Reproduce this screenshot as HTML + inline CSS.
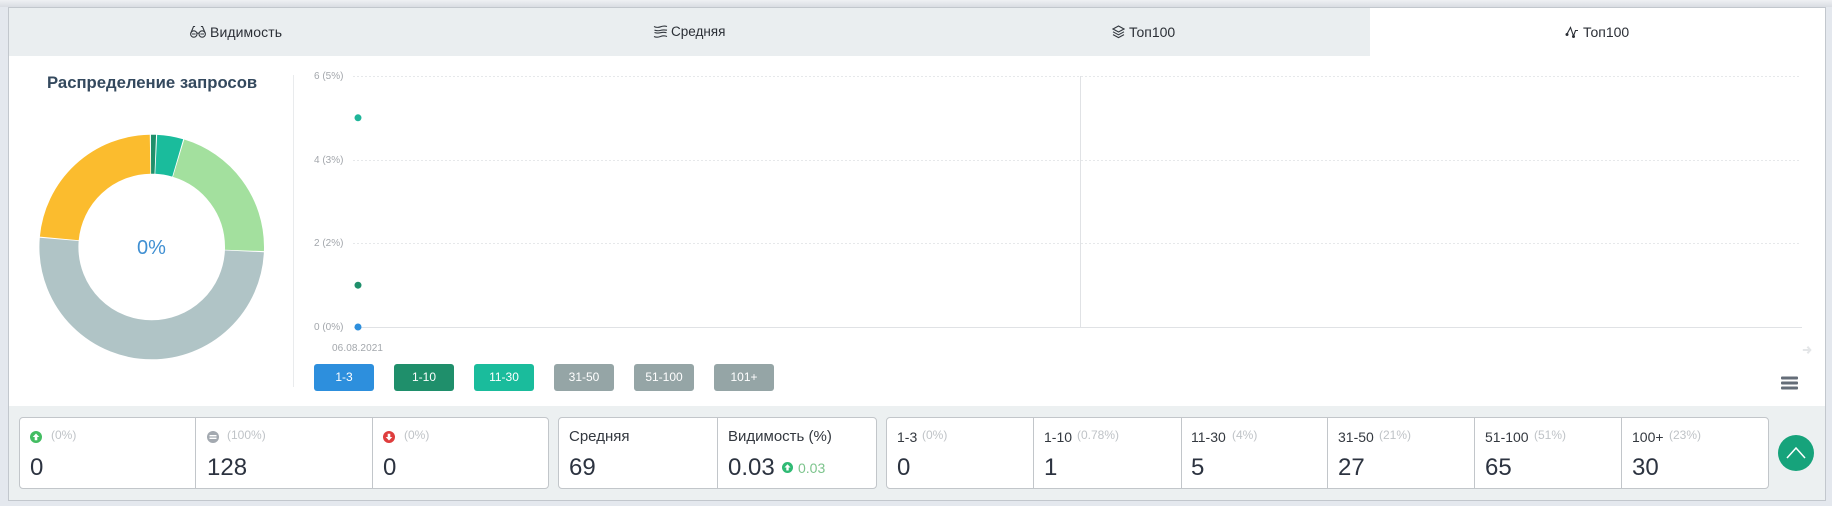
<!DOCTYPE html>
<html lang="ru">
<head>
<meta charset="utf-8">
<title>Распределение запросов</title>
<style>
html,body{margin:0;padding:0}
body{width:1832px;height:506px;overflow:hidden;position:relative;background:#e4e8ee;font-family:"Liberation Sans",sans-serif;color:#2c3340}
.abs,.t,.svg{position:absolute}
.t{white-space:nowrap;line-height:16px}
#top{left:0;top:0;width:1832px;height:7px;background:linear-gradient(#eef0f3,#d9dde3)}
#panel{left:8px;top:7px;width:1816px;height:492px;border:1px solid #c2c7cd;background:#fff;box-sizing:content-box}
#tabs{left:9px;top:8px;width:1361px;height:48px;background:#eaeef0}
#bottom{left:9px;top:406px;width:1816px;height:94px;background:#ecf0f1}
.tab{font-size:14px;color:#2b2f36;top:24px}
.card{top:417px;height:72px;background:#fff;border:1px solid #c2c6ca;border-radius:4px;box-sizing:border-box}
.div{top:417px;height:72px;width:1px;background:#c2c6ca}
.lab{font-size:14px;color:#33383f;top:429px}
.pct{font-size:12px;color:#bfc3c7;top:427px}
.num{font-size:24px;line-height:28px;color:#2c3340;top:454px}
.ax{font-size:10px;color:#a3a7ac;left:314px;line-height:12px}
.btn{top:364px;width:60px;height:27px;border-radius:3px;color:#fff;font-size:12px;line-height:27px;text-align:center}
</style>
</head>
<body>
<div class="abs" id="top"></div>
<div class="abs" id="panel"></div>
<div class="abs" id="tabs"></div>
<div class="abs" id="bottom"></div>

<svg class="svg" style="left:189px;top:24px" width="18" height="15" viewBox="0 0 17 15" fill="none" stroke="#33383f" stroke-width="1.1"><circle cx="4.3" cy="10" r="3.2"/><circle cx="12.7" cy="10" r="3.2"/><path d="M7.5 9.5q1-.8 2 0M1.2 9.5 4 2.5h1.6M15.8 9.5 13 2.5h-1.6M2.5 10h3.6M10.9 10h3.6"/></svg>
<div class="t tab" style="left:210px;letter-spacing:.1px">Видимость</div>

<svg class="svg" style="left:653px;top:24px" width="15" height="15" viewBox="0 0 15 15" fill="none" stroke="#33383f" stroke-width="1.1"><path d="M1 2.5q3 1.6 6.5.3T14 2.5M1.5 6.2q3.5 1 6 .2t6.5-.2M1.5 8.5q3 1 6 .2t6 0M1 12.5q3 1.4 6.5 0t6.5 0"/></svg>
<div class="t tab" style="left:671px;font-size:13.5px">Средняя</div>

<svg class="svg" style="left:1112px;top:25px" width="13" height="14" viewBox="0 0 13 14" fill="none" stroke="#33383f" stroke-width="1.1"><path d="M6.5 1 12 4 6.5 7 1 4zM1 6.8l5.5 3 5.500-3M1 9.600l5.500 3 5.500-3"/></svg>
<div class="t tab" style="left:1129px">Топ100</div>

<svg class="svg" style="left:1565px;top:25px" width="14" height="14" viewBox="0 0 14 14" fill="none" stroke="#2b2f36" stroke-width="1.1"><path d="M2 9 5.500 2.500 8.500 11 10.500 5.500H13"/><circle cx="2" cy="9.500" r="1.500" fill="#2b2f36" stroke="none"/><circle cx="8.500" cy="11.500" r="1.500" fill="#2b2f36" stroke="none"/></svg>
<div class="t tab" style="left:1583px">Топ100</div>

<div class="t" style="left:47px;top:75px;font-size:16.7px;font-weight:bold;color:#34495e">Распределение запросов</div>
<div class="abs" style="left:293px;top:75px;width:1px;height:312px;background:#e9ebed"></div>

<svg class="svg" style="left:39px;top:134px" width="226" height="226" viewBox="0 0 226 226" fill="none">
<g transform="rotate(-90 112.7 113)" stroke-width="39">
<circle cx="112.7" cy="113" r="92.8" pathLength="128" stroke="#1f8f6b" stroke-dasharray="0.8 127.2" stroke-dashoffset="0"/>
<circle cx="112.7" cy="113" r="92.8" pathLength="128" stroke="#1abc9c" stroke-dasharray="4.8 123.2" stroke-dashoffset="-1"/>
<circle cx="112.7" cy="113" r="92.8" pathLength="128" stroke="#a3e09e" stroke-dasharray="26.8 101.2" stroke-dashoffset="-6"/>
<circle cx="112.7" cy="113" r="92.8" pathLength="128" stroke="#b0c4c6" stroke-dasharray="64.8 63.2" stroke-dashoffset="-33"/>
<circle cx="112.7" cy="113" r="92.8" pathLength="128" stroke="#fbbc2e" stroke-dasharray="29.8 98.2" stroke-dashoffset="-98"/>
</g>
</svg>
<div class="t" style="left:137px;top:240px;font-size:20px;color:#3f8fd2">0%</div>

<div class="t ax" style="top:71px">6 (5%)</div>
<div class="t ax" style="top:155px">4 (3%)</div>
<div class="t ax" style="top:238px">2 (2%)</div>
<div class="t ax" style="top:322px">0 (0%)</div>
<div class="t ax" style="left:332px;top:343px;letter-spacing:.1px">06.08.2021</div>

<svg class="svg" style="left:350px;top:70px" width="1470" height="265" viewBox="350 70 1470 265" fill="none">
<path d="M353 76.5H1801M353 160.5H1801M353 243.5H1801" stroke="#e6e8ea" stroke-dasharray="2 2"/>
<path d="M354 327.5H1802" stroke="#e0e2e5"/>
<path d="M1080.5 76V327" stroke="#e0e2e5"/>
<circle cx="358" cy="117.8" r="3.5" fill="#1fb599"/>
<circle cx="358" cy="285.2" r="3.5" fill="#1f8f6b"/>
<circle cx="358" cy="327" r="3.5" fill="#2d8fdd"/>
</svg>

<div class="abs btn" style="left:314px;background:#2d8fdd">1-3</div>
<div class="abs btn" style="left:394px;background:#1f8f6b">1-10</div>
<div class="abs btn" style="left:474px;background:#1abc9c">11-30</div>
<div class="abs btn" style="left:554px;background:#95a5a6">31-50</div>
<div class="abs btn" style="left:634px;background:#95a5a6">51-100</div>
<div class="abs btn" style="left:714px;background:#95a5a6">101+</div>

<svg class="svg" style="left:1802px;top:345px" width="10" height="10" viewBox="0 0 12 12" fill="none" stroke="#e4e6e8" stroke-width="2.4"><path d="M1 6h9M6.500 2 10 6l-3.500 4"/></svg>
<svg class="svg" style="left:1781px;top:376px" width="17" height="14" viewBox="0 0 17 14" fill="#646d78"><rect y="0.5" width="17" height="3" rx="1"/><rect y="5.5" width="17" height="3" rx="1"/><rect y="10.5" width="17" height="3" rx="1"/></svg>

<div class="abs card" style="left:19px;width:530px"></div>
<div class="abs div" style="left:195px"></div>
<div class="abs div" style="left:372px"></div>
<svg class="svg" style="left:30px;top:431px" width="12" height="12" viewBox="0 0 12 12"><circle cx="6" cy="6" r="6" fill="#43bd62"/><path d="M6 2.500 9.300 6H7.300V9.300H4.700V6H2.700z" fill="#fff"/></svg>
<div class="t pct" style="left:51px">(0%)</div>
<div class="t num" style="left:30px">0</div>
<svg class="svg" style="left:207px;top:431px" width="12" height="12" viewBox="0 0 12 12"><circle cx="6" cy="6" r="6" fill="#a3a9b0"/><rect x="2.500" y="4" width="7" height="1.400" fill="#fff"/><rect x="2.500" y="6.600" width="7" height="1.400" fill="#fff"/></svg>
<div class="t pct" style="left:227px">(100%)</div>
<div class="t num" style="left:207px">128</div>
<svg class="svg" style="left:383px;top:431px" width="12" height="12" viewBox="0 0 12 12"><circle cx="6" cy="6" r="6" fill="#df3d3d"/><path d="M6 9.500 2.700 6H4.700V2.700H7.300V6H9.300z" fill="#fff"/></svg>
<div class="t pct" style="left:404px">(0%)</div>
<div class="t num" style="left:383px">0</div>

<div class="abs card" style="left:558px;width:319px"></div>
<div class="abs div" style="left:717px"></div>
<div class="t lab" style="left:569px;font-size:15px">Средняя</div>
<div class="t num" style="left:569px">69</div>
<div class="t lab" style="left:728px;font-size:15px">Видимость (%)</div>
<div class="t num" style="left:728px">0.03</div>
<svg class="svg" style="left:782px;top:462px" width="11" height="11" viewBox="0 0 12 12"><circle cx="6" cy="6" r="6" fill="#2fba74"/><path d="M6 2.500 9.300 6H7.300V9.300H4.700V6H2.700z" fill="#fff"/></svg>
<div class="t" style="left:798px;top:460px;font-size:14px;color:#7cc48c">0.03</div>

<div class="abs card" style="left:886px;width:883px"></div>
<div class="abs div" style="left:1033px"></div>
<div class="abs div" style="left:1181px"></div>
<div class="abs div" style="left:1327px"></div>
<div class="abs div" style="left:1474px"></div>
<div class="abs div" style="left:1621px"></div>

<div class="t lab" style="left:897px">1-3</div><div class="t pct" style="left:922px">(0%)</div><div class="t num" style="left:897px">0</div>
<div class="t lab" style="left:1044px">1-10</div><div class="t pct" style="left:1077px">(0.78%)</div><div class="t num" style="left:1044px">1</div>
<div class="t lab" style="left:1191px">11-30</div><div class="t pct" style="left:1232px">(4%)</div><div class="t num" style="left:1191px">5</div>
<div class="t lab" style="left:1338px">31-50</div><div class="t pct" style="left:1379px">(21%)</div><div class="t num" style="left:1338px">27</div>
<div class="t lab" style="left:1485px">51-100</div><div class="t pct" style="left:1534px">(51%)</div><div class="t num" style="left:1485px">65</div>
<div class="t lab" style="left:1632px">100+</div><div class="t pct" style="left:1669px">(23%)</div><div class="t num" style="left:1632px">30</div>

<svg class="svg" style="left:1778px;top:435px" width="36" height="36" viewBox="0 0 36 36"><circle cx="18" cy="18" r="18" fill="#16a37b"/><path d="M9 23 18 13l9 10" fill="none" stroke="#fff" stroke-width="1.5"/></svg>
</body>
</html>
